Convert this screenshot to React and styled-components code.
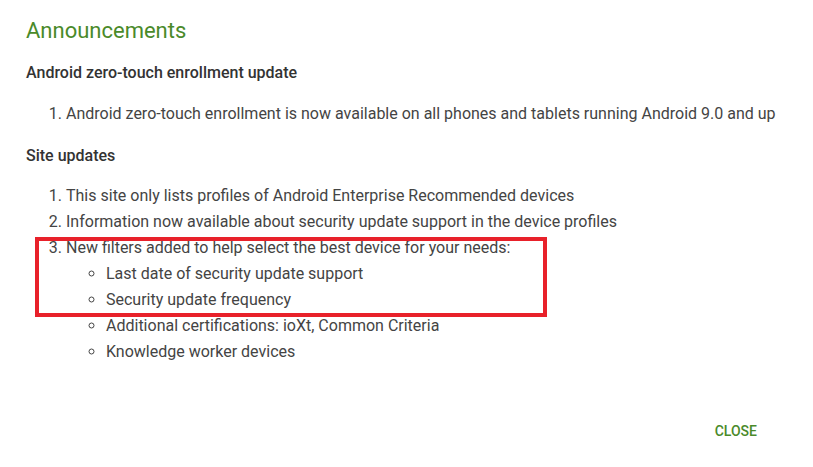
import React from "react";
import styled, { createGlobalStyle } from "styled-components";

const Global = createGlobalStyle`
  html, body { margin: 0; padding: 0; background: #fff; }
  body { font-family: Roboto, "Noto Sans", Arial, sans-serif; }
`;

const Dialog = styled.div`
  width: 813px;
  height: 467px;
  box-sizing: border-box;
  padding: 15px 26px 0 26px;
  display: flex;
  flex-direction: column;
  background: #fff;
`;

const Title = styled.h2`
  margin: 0 0 14px 0;
  font-size: 22px;
  line-height: 32px;
  font-weight: 400;
  color: #4a8a2a;
`;

const Section = styled.h3`
  margin: 0 0 ${(p) => p.$gap}px 0;
  font-size: 16px;
  line-height: 24px;
  font-weight: 500;
  color: #333;
`;

const OList = styled.ol`
  margin: 0 0 ${(p) => p.$gap || 0}px 0;
  padding-left: 40px;
  font-size: 16px;
  line-height: 26px;
  color: #444;
`;

const Item = styled.li`
  position: relative;
`;

const SubList = styled.ul`
  margin: 0;
  padding-left: 40px;
  list-style-type: circle;
`;

const Highlight = styled.div`
  position: absolute;
  left: -31px;
  top: 2px;
  width: 512px;
  height: 80px;
  box-sizing: border-box;
  border: 4px solid #e8212a;
  pointer-events: none;
`;

const Footer = styled.div`
  margin-top: auto;
  display: flex;
  justify-content: flex-end;
  padding: 0 22px 18px 0;
`;

const Button = styled.button`
  background: none;
  border: none;
  padding: 8px 8px;
  font-family: Roboto, Arial, sans-serif;
  font-size: 14px;
  font-weight: 500;
  line-height: 20px;
  color: #4a8a2a;
  text-transform: uppercase;
  cursor: pointer;
`;

export default function App() {
  return (
    <>
      <Global />
      <Dialog>
        <Title>Announcements</Title>
        <Section $gap={16}>Android zero-touch enrollment update</Section>
        <OList $gap={17}>
          <li>
            Android zero-touch enrollment is now available on all phones and
            tablets running Android 9.0 and up
          </li>
        </OList>
        <Section $gap={15}>Site updates</Section>
        <OList>
          <li>This site only lists profiles of Android Enterprise Recommended devices</li>
          <li>Information now available about security update support in the device profiles</li>
          <Item>
            New filters added to help select the best device for your needs:
            <Highlight />
            <SubList>
              <li>Last date of security update support</li>
              <li>Security update frequency</li>
              <li>Additional certifications: ioXt, Common Criteria</li>
              <li>Knowledge worker devices</li>
            </SubList>
          </Item>
        </OList>
        <Footer>
          <Button>Close</Button>
        </Footer>
      </Dialog>
    </>
  );
}
